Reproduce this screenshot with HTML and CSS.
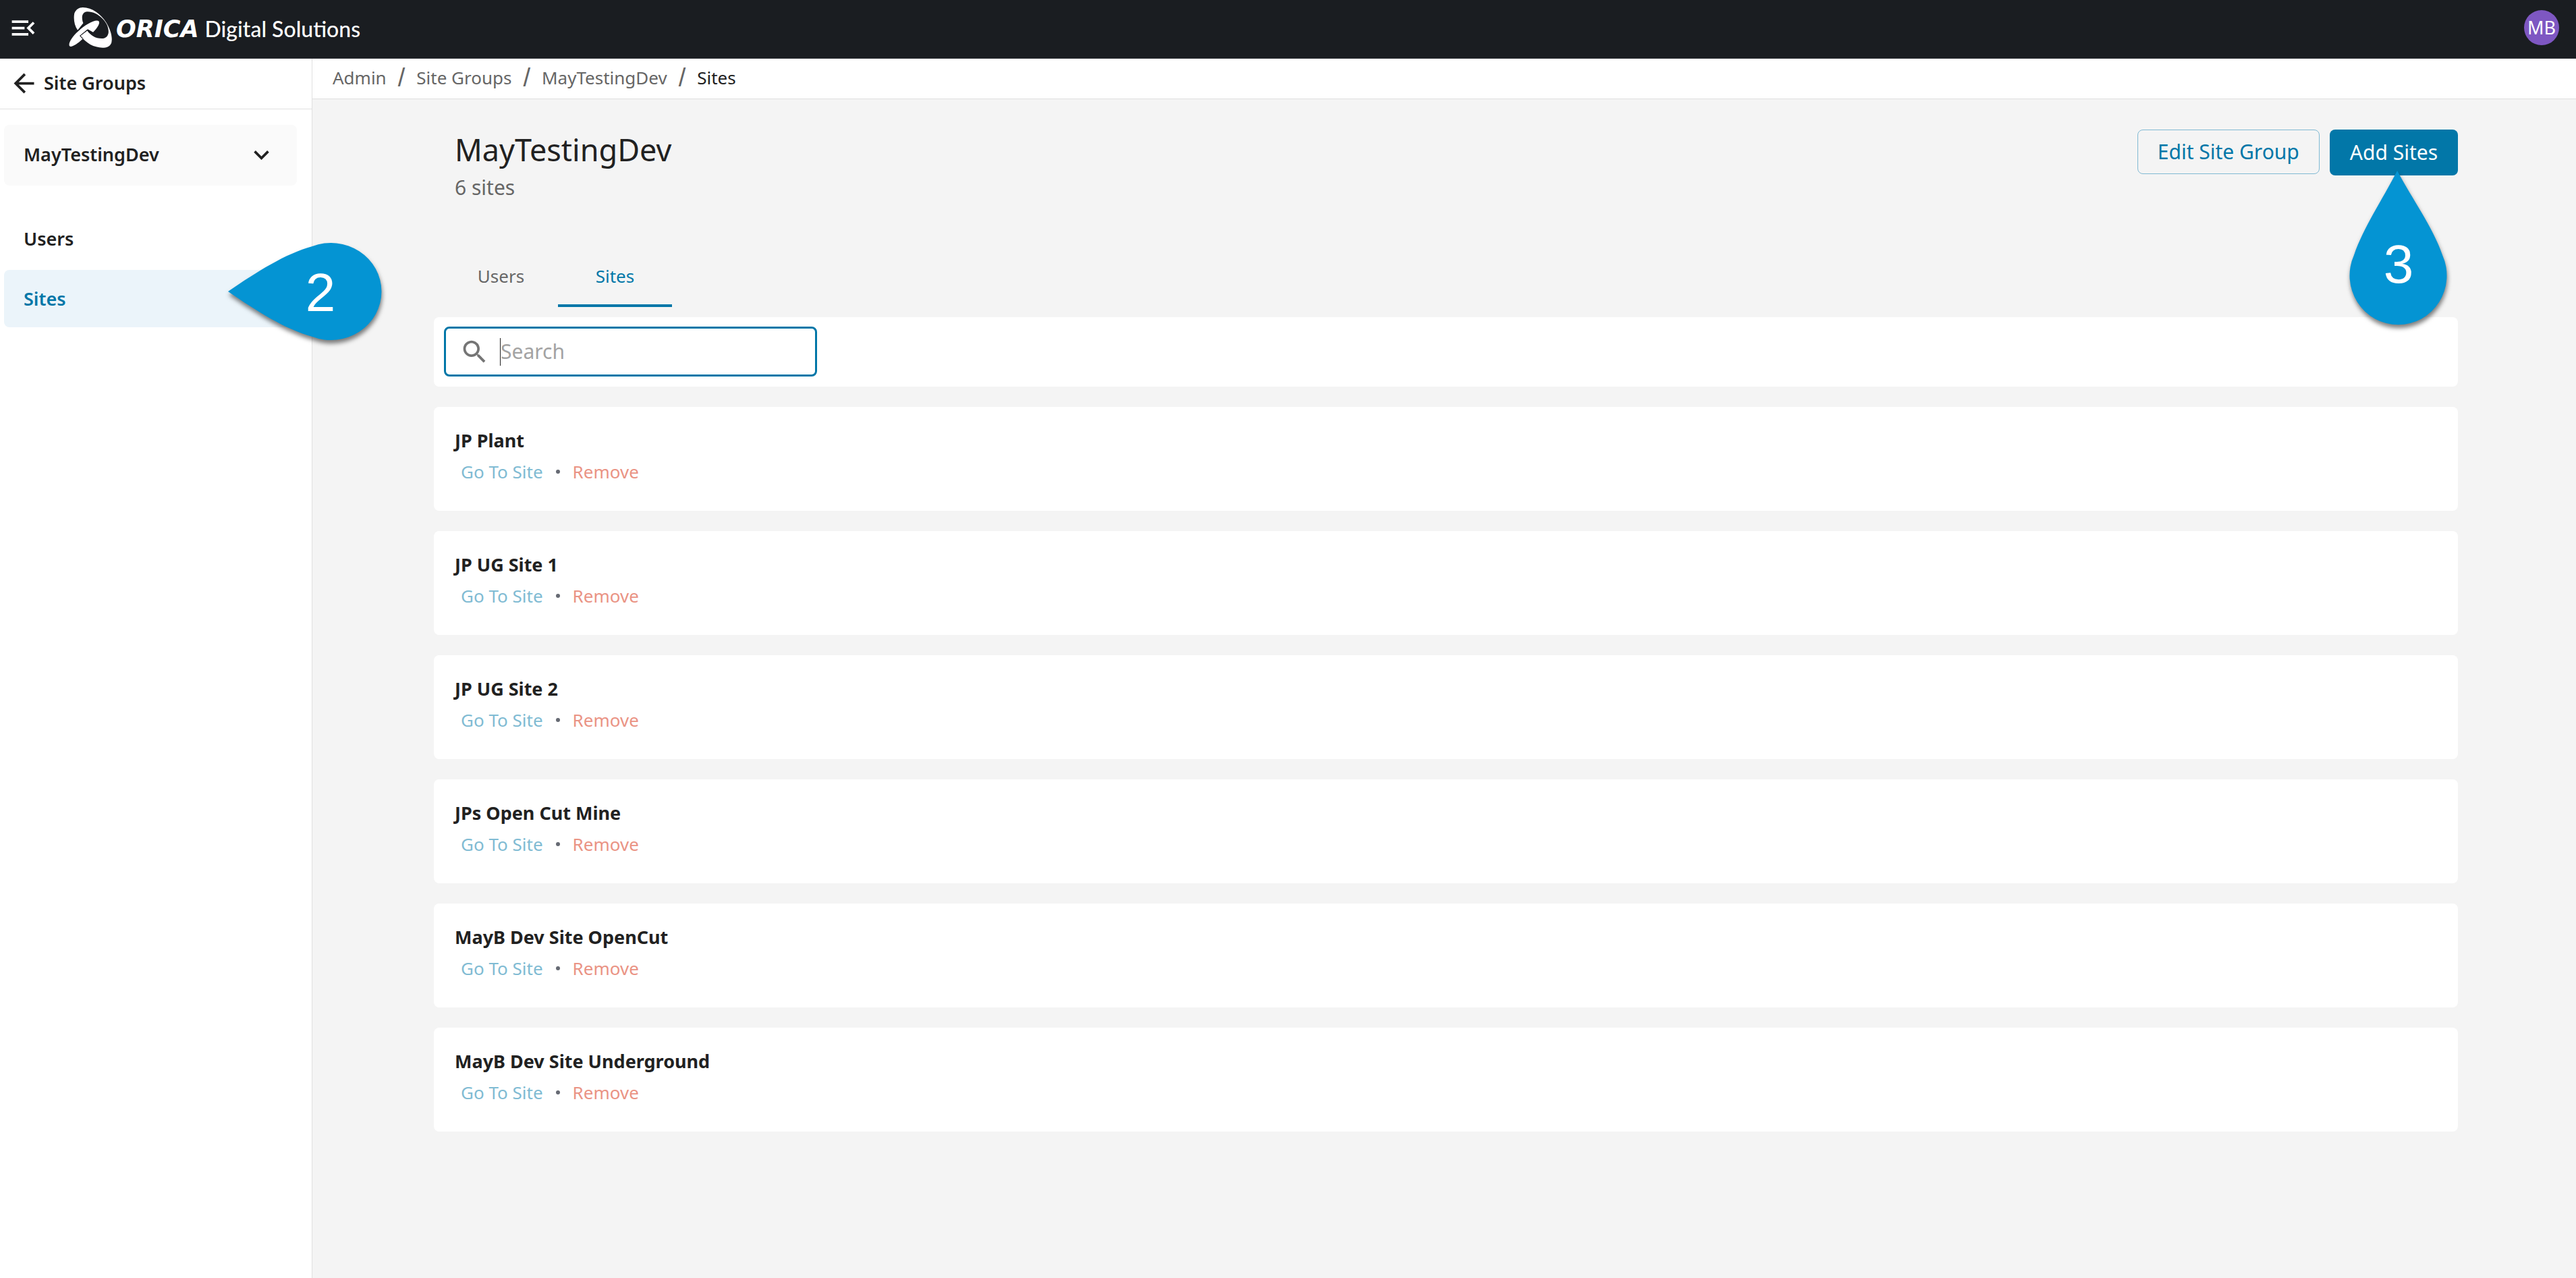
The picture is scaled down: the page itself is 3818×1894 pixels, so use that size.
FILE: index.html
```html
<!DOCTYPE html>
<html lang="en">
<head>
<meta charset="utf-8">
<meta name="viewport" content="width=device-width, initial-scale=1">
<title>MayTestingDev - Sites</title>
<link rel="stylesheet" href="styles.css">
</head>
<body>
<header class="topbar">
  <button class="icon-button" type="button" aria-label="Collapse menu">
    <svg class="icon" viewBox="0 0 24 24"><path d="M3 18h13v-2H3v2zm0-5h10v-2H3v2zm0-7v2h13V6H3zm18 9.590L17.420 12 21 8.410 19.590 7l-5 5 5 5L21 15.590z"/></svg>
  </button>
  <a class="brand" href="#">
    <svg class="brand-mark" viewBox="0 0 192 184" aria-hidden="true">
      <path d="M39 102C24 80 20 52 24 28 30 9 46 0 62 0c42 0 80 30 104 66 20 32 30 66 24 92-6 16-22 22-40 22-38 0-74-20-98-53l30-23c14 20 36 35 64 35 20 0 30-12 31-30 0-22-10-42-26-58-20-21-46-33-70-32-14 1-21 12-22 24 0 12 2 20 5 27z"/>
      <path d="M133 61c8 8-4 28-25 50L84 97 48 127l13 14C38 164 10 180 3 173c-8-10 10-42 38-66 32-32 80-56 92-46z"/>
      <path class="brand-seam" d="M37 106C44 98 54 89 66 80M64 139L50 127 82 101 100 119"/>
    </svg>
    <span class="brand-name">ORICA</span>
    <span class="brand-product">Digital Solutions</span>
  </a>
  <button class="avatar" type="button">MB</button>
</header>
<div class="shell">
  <aside class="sidebar">
    <a class="back" href="#">
      <svg class="icon" viewBox="0 0 24 24"><path d="M20 11H7.830l5.590-5.590L12 4l-8 8 8 8 1.410-1.410L7.830 13H20v-2z"/></svg>
      Site Groups
    </a>
    <button class="group-picker" type="button">
      MayTestingDev
      <svg class="icon" viewBox="0 0 24 24"><path d="M16.590 8.590L12 13.170 7.410 8.590 6 10l6 6 6-6z"/></svg>
    </button>
    <nav class="side-nav">
      <a class="side-link" href="#">Users</a>
      <a class="side-link side-link-active" href="#">Sites
        <svg class="pin pin-left" viewBox="0 0 252 170" role="img" aria-label="Step 2">
          <path class="pin-shape" d="M10 82C54 52 95 26 135 15A75 72 0 1 1 135 149C95 138 54 112 10 82z"/>
          <text class="pin-text" x="147" y="111">2</text>
        </svg>
      </a>
    </nav>
  </aside>
  <div class="content">
    <nav class="breadcrumb" aria-label="Breadcrumb">
      <a href="#">Admin</a><span class="slash">/</span>
      <a href="#">Site Groups</a><span class="slash">/</span>
      <a href="#">MayTestingDev</a><span class="slash">/</span>
      <span class="current">Sites</span>
    </nav>
    <main class="page">
      <div class="page-head">
        <div>
          <h1 class="title">MayTestingDev</h1>
          <p class="count">6 sites</p>
        </div>
        <div class="actions">
          <button class="button button-outline" type="button">Edit Site Group</button>
          <button class="button button-solid" type="button">Add Sites
            <svg class="pin pin-up" viewBox="0 0 170 250" role="img" aria-label="Step 3">
              <path class="pin-shape" d="M84 10C107 53 137 94 151 135A72 73 0 1 1 20 135C34 94 62 53 84 10z"/>
              <text class="pin-text" x="86" y="176">3</text>
            </svg>
          </button>
        </div>
      </div>
      <div class="tabs" role="tablist">
        <button class="tab" role="tab" type="button">Users</button>
        <button class="tab tab-active" role="tab" type="button" aria-selected="true">Sites</button>
      </div>
      <div class="search-card">
        <label class="search">
          <svg class="icon" viewBox="0 0 24 24"><path d="M15.500 14h-.790l-.280-.270C15.410 12.590 16 11.110 16 9.500 16 5.910 13.090 3 9.500 3S3 5.910 3 9.500 5.910 16 9.500 16c1.610 0 3.090-.590 4.230-1.570l.270.280v.790l5 4.990L20.490 19l-4.990-5zm-6 0C7.010 14 5 11.990 5 9.500S7.010 5 9.500 5 14 7.010 14 9.500 11.990 14 9.500 14z"/></svg>
          <span class="caret"></span>
          <input class="search-input" type="text" placeholder="Search" aria-label="Search">
        </label>
      </div>
      <ul class="sites">
        <li class="site"><h2 class="site-name">JP Plant</h2><div class="site-actions"><a class="go" href="#">Go To Site</a><span class="dot"></span><a class="remove" href="#">Remove</a></div></li>
        <li class="site"><h2 class="site-name">JP UG Site 1</h2><div class="site-actions"><a class="go" href="#">Go To Site</a><span class="dot"></span><a class="remove" href="#">Remove</a></div></li>
        <li class="site"><h2 class="site-name">JP UG Site 2</h2><div class="site-actions"><a class="go" href="#">Go To Site</a><span class="dot"></span><a class="remove" href="#">Remove</a></div></li>
        <li class="site"><h2 class="site-name">JPs Open Cut Mine</h2><div class="site-actions"><a class="go" href="#">Go To Site</a><span class="dot"></span><a class="remove" href="#">Remove</a></div></li>
        <li class="site"><h2 class="site-name">MayB Dev Site OpenCut</h2><div class="site-actions"><a class="go" href="#">Go To Site</a><span class="dot"></span><a class="remove" href="#">Remove</a></div></li>
        <li class="site"><h2 class="site-name">MayB Dev Site Underground</h2><div class="site-actions"><a class="go" href="#">Go To Site</a><span class="dot"></span><a class="remove" href="#">Remove</a></div></li>
      </ul>
    </main>
  </div>
</div>
</body>
</html>
```
FILE: styles.css
```css
* { box-sizing: border-box; }

body {
  margin: 0;
  min-height: 100vh;
  display: flex;
  flex-direction: column;
  background: #f4f4f4;
  color: #212121;
  font-family: "Noto Sans", sans-serif;
  font-size: 26px;
  line-height: 36px;
}

a { color: inherit; text-decoration: none; }

button {
  margin: 0;
  padding: 0;
  border: 0;
  background: none;
  color: inherit;
  font: inherit;
  cursor: pointer;
}

h1, h2, p, ul { margin: 0; padding: 0; font-weight: 400; }

.icon { display: block; flex: none; width: 45px; height: 45px; fill: currentColor; }

/* Top bar */
.topbar {
  display: flex;
  align-items: center;
  height: 87px;
  padding: 0 25px 4px 12px;
  border-bottom: 1px solid #33363b;
  background: #1a1d21;
  color: #fff;
}

.icon-button { margin-right: 45px; }

.brand { display: flex; align-items: center; margin-right: auto; }

.brand-mark { width: 64px; height: 61px; fill: #fff; }

.brand-seam { fill: none; stroke: #1a1d21; stroke-width: 2; }

.brand-name {
  margin-left: 6px;
  padding-top: 4px;
  font-family: "DejaVu Sans", sans-serif;
  font-size: 35px;
  font-weight: 700;
  font-style: italic;
}

.brand-product {
  margin-left: 9px;
  padding-top: 4px;
  font-family: Lato, sans-serif;
  font-size: 32px;
  font-weight: 500;
}

.avatar {
  width: 52px;
  height: 52px;
  border-radius: 50%;
  background: #7e57c2;
  font-size: 27px;
}

/* Shell */
.shell { display: flex; flex: 1; }

.sidebar {
  flex: none;
  width: 463px;
  border-right: 1px solid #e0e0e0;
  background: #fff;
  font-size: 27px;
  font-weight: 600;
}

.back {
  display: flex;
  align-items: center;
  gap: 7px;
  height: 75px;
  padding: 0 0 2px 13px;
  border-bottom: 1px solid #e0e0e0;
}

.group-picker {
  display: flex;
  align-items: center;
  justify-content: space-between;
  width: 434px;
  height: 90px;
  margin: 23px 0 36px 6px;
  padding: 0 30px 2px 29px;
  border-radius: 8px;
  background: #fafafa;
}

.side-nav { display: flex; flex-direction: column; gap: 4px; width: 434px; margin-left: 6px; }

.side-link {
  position: relative;
  display: flex;
  align-items: center;
  height: 85px;
  padding-left: 29px;
  border-radius: 8px;
}

.side-link-active { background: #ebf4fa; color: #0277a8; }

.content { flex: 1; min-width: 0; }

.breadcrumb {
  display: flex;
  align-items: center;
  gap: 17px;
  height: 60px;
  padding: 0 0 3px 30px;
  border-bottom: 1px solid #e0e0e0;
  background: #fff;
  color: #666;
}

.slash { font-family: "Liberation Sans", sans-serif; font-size: 38px; }

.current { color: #212121; }

/* Page */
.page { padding: 45px 175px 60px 180px; }

.page-head { display: flex; justify-content: space-between; padding-left: 31px; }

.title { font-size: 45px; line-height: 60px; }

.count { margin-top: 6px; color: #666; font-size: 30px; line-height: 40px; }

.actions { display: flex; align-items: flex-start; gap: 15px; }

.button {
  position: relative;
  padding: 14px 30px;
  border-radius: 8px;
  font-size: 30px;
  line-height: 40px;
}

.button-outline { padding: 12px 29px; border: 1px solid #80b9d3; color: #0277a8; }

.button-solid { background: #0277a8; color: #fff; }

.tabs { display: flex; margin: 69px 0 15px 15px; }

.tab { width: 169px; height: 88px; border-bottom: 4px solid transparent; color: #666; }

.tab-active { border-bottom-color: #0277a8; color: #0277a8; }

.search-card { padding: 14px 15px 15px; border-radius: 8px; background: #fff; }

.search {
  display: flex;
  align-items: center;
  width: 553px;
  height: 74px;
  padding: 0 25px 0 20px;
  border: 3px solid #0277a8;
  border-radius: 8px;
  color: #757575;
}

.caret { width: 1px; height: 41px; margin-left: 15px; background: #212121; }

.search-input {
  flex: 1;
  min-width: 0;
  padding: 0;
  border: 0;
  outline: 0;
  background: none;
  color: #212121;
  font: inherit;
  font-size: 30px;
}

.search-input::placeholder { color: #a3a3a3; opacity: 1; }

.sites { display: flex; flex-direction: column; gap: 30px; margin-top: 30px; list-style: none; }

.site { padding: 32px 31px 40px; border-radius: 8px; background: #fff; }

.site-name { font-size: 27px; font-weight: 700; }

.site-actions { display: flex; align-items: center; gap: 19px; margin-top: 10px; padding-left: 9px; }

.go { color: #80bbd3; }

.remove { color: #ea9384; }

.dot { width: 6px; height: 6px; border-radius: 50%; background: #666a73; }

/* Numbered step pins laid over the controls they point at */
.pin { position: absolute; z-index: 2; overflow: visible; pointer-events: none; }

.pin-left { top: -50px; left: 322px; width: 252px; height: 170px; }

.pin-up { top: 51px; left: 16px; width: 170px; height: 250px; }

.pin-shape { fill: #0494d3; filter: drop-shadow(1px 5px 3px rgba(0, 0, 0, 0.5)); }

.pin-text {
  fill: #fff;
  font-family: "Liberation Sans", sans-serif;
  font-size: 80px;
  font-weight: 400;
  text-anchor: middle;
}
```
